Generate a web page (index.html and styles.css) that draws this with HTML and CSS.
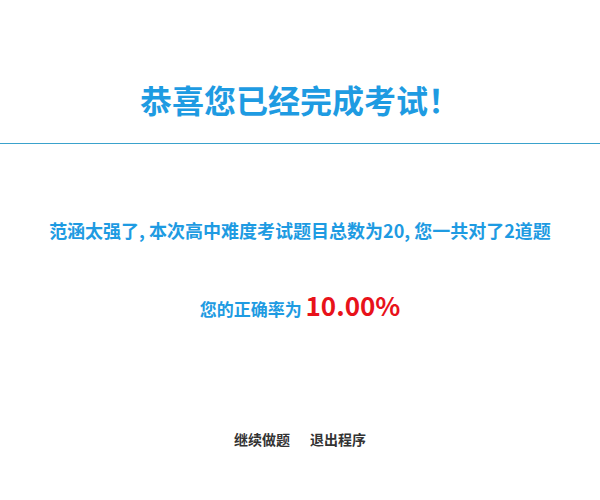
FILE: index.html
```html
<!DOCTYPE html>
<html lang="zh">
<head>
<meta charset="utf-8">
<link rel="stylesheet" href="styles.css">
</head>
<body>
<div class="page">
  <header class="head">
    <h1 class="title">恭喜您已经完成考试！</h1>
  </header>
  <p class="summary">范涵太强了, 本次高中难度考试题目总数为20, 您一共对了2道题</p>
  <p class="rate">您的正确率为 <span class="pct">10.00%</span></p>
  <div class="actions">
    <a class="btn">继续做题</a>
    <a class="btn">退出程序</a>
  </div>
</div>
</body>
</html>
```
FILE: styles.css
```css
html, body {
  margin: 0;
  padding: 0;
  background: #fff;
}
.page {
  width: 600px;
  font-family: "Noto Sans CJK SC", "Noto Sans", sans-serif;
}
.head {
  height: 143px;
  border-bottom: 1px solid #3aa2cc;
  display: flex;
  justify-content: center;
  align-items: flex-start;
}
.title {
  margin: 75px 0 0;
  font-size: 32px;
  font-weight: 700;
  color: #1e9be2;
  line-height: 48px;
}
.summary {
  margin: 72px 0 0;
  text-align: center;
  font-size: 18px;
  font-weight: 700;
  color: #1e9be2;
  line-height: 28px;
}
.rate {
  margin: 44px 0 0;
  text-align: center;
  font-size: 17px;
  font-weight: 700;
  color: #1e9be2;
  line-height: 34px;
}
.pct {
  color: #e8121a;
  font-size: 26px;
}
.actions {
  margin-top: 103px;
  display: flex;
  justify-content: center;
  gap: 20px;
}
.btn {
  font-size: 14px;
  font-weight: 700;
  color: #333;
  line-height: 20px;
}
```
